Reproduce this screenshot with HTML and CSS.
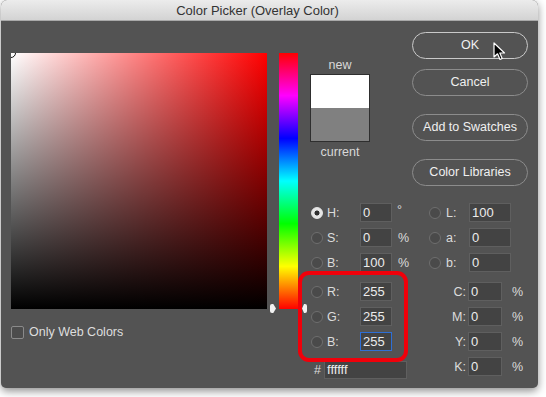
FILE: index.html
```html
<!DOCTYPE html>
<html>
<head>
<meta charset="utf-8">
<link rel="stylesheet" href="styles.css">
</head>
<body>
<div class="dialog">
  <div class="titlebar">Color Picker (Overlay Color)</div>
  <div class="body">
    <div class="left">
      <div class="field"><span class="field-marker"></span></div>
      <div class="webcolors"><span class="checkbox"></span><span>Only Web Colors</span></div>
    </div>
    <div class="slider-wrap">
      <div class="hue"></div>
      <span class="arrow arrow-l"></span>
      <span class="arrow arrow-r"></span>
    </div>
    <div class="right">
      <div class="top">
        <div class="swatch-col">
          <div class="sw-label">new</div>
          <div class="swatch"><div class="sw-new"></div><div class="sw-cur"></div></div>
          <div class="sw-label">current</div>
        </div>
        <div class="buttons">
          <div class="btn btn-ok">OK</div>
          <div class="btn btn-cancel">Cancel</div>
          <div class="btn btn-gap">Add to Swatches</div>
          <div class="btn btn-gap">Color Libraries</div>
        </div>
      </div>
      <div class="fields">
        <div class="col-a">
          <div class="row"><span class="radio on"></span><span class="lbl">H:</span><span class="inp">0</span><span class="unit deg">°</span></div>
          <div class="row"><span class="radio"></span><span class="lbl">S:</span><span class="inp">0</span><span class="unit">%</span></div>
          <div class="row"><span class="radio"></span><span class="lbl">B:</span><span class="inp">100</span><span class="unit">%</span></div>
          <div class="row group"><span class="radio"></span><span class="lbl">R:</span><span class="inp">255</span></div>
          <div class="row"><span class="radio"></span><span class="lbl">G:</span><span class="inp">255</span></div>
          <div class="row"><span class="radio"></span><span class="lbl">B:</span><span class="inp focus">255</span></div>
          <div class="row hexrow"><span class="hash">#</span><span class="inp hex">ffffff</span></div>
        </div>
        <div class="col-b">
          <div class="row"><span class="radio"></span><span class="lbl2">L:</span><span class="inp wide">100</span></div>
          <div class="row"><span class="radio"></span><span class="lbl2">a:</span><span class="inp wide">0</span></div>
          <div class="row"><span class="radio"></span><span class="lbl2">b:</span><span class="inp wide">0</span></div>
          <div class="row group"><span class="lbl3">C:</span><span class="inp cmyk">0</span><span class="unit2">%</span></div>
          <div class="row"><span class="lbl3">M:</span><span class="inp cmyk">0</span><span class="unit2">%</span></div>
          <div class="row"><span class="lbl3">Y:</span><span class="inp cmyk">0</span><span class="unit2">%</span></div>
          <div class="row"><span class="lbl3">K:</span><span class="inp cmyk">0</span><span class="unit2">%</span></div>
        </div>
      </div>
      <div class="highlight"></div>
    </div>
  </div>
  <svg class="cursor" width="13" height="19" viewBox="0 0 13 19"><path d="M1 1 L1 15 L4.5 11.8 L7 17.5 L9.2 16.5 L6.8 11 L11.5 11 Z" fill="#000" stroke="#fff" stroke-width="1.2" stroke-linejoin="round"/></svg>
</div>
</body>
</html>
```

FILE: styles.css
```css
html, body {
  margin: 0;
  padding: 0;
  background: #ffffff;
}
body {
  width: 546px;
  height: 397px;
  overflow: hidden;
  font-family: "Liberation Sans", Arial, sans-serif;
}
.dialog {
  position: relative;
  margin-left: 1px;
  width: 537px;
  height: 388px;
  background: #535353;
  border-radius: 6px 6px 5px 5px;
  box-shadow: 0 3px 8px rgba(0,0,0,0.45);
  overflow: hidden;
}
.titlebar {
  height: 20px;
  line-height: 21px;
  border-bottom: 1px solid #a9a9a9;
  background: linear-gradient(#ececec, #d3d3d3);
  color: #333;
  font-size: 13px;
  text-align: center;
  padding-right: 24px;
}
.body {
  display: flex;
  padding: 11px 0 0 10px;
}
.left {
  margin-top: 21px;
  width: 256px;
}
.field {
  position: relative;
  width: 256px;
  height: 256px;
  overflow: hidden;
  background: linear-gradient(to top, #000, rgba(0,0,0,0)), linear-gradient(to right, #fff, #f00);
}
.field-marker {
  position: absolute;
  left: -5px;
  top: -5px;
  width: 8px;
  height: 8px;
  border: 1.5px solid #111;
  border-radius: 50%;
  box-shadow: inset 0 0 0 1px #fff;
}
.webcolors {
  display: flex;
  align-items: center;
  margin-top: 16px;
  color: #dedede;
  font-size: 12.5px;
}
.checkbox {
  width: 11px;
  height: 11px;
  border: 1px solid #8a8a8a;
  border-radius: 2px;
  background: #4c4c4c;
  margin-right: 5px;
}
.slider-wrap {
  position: relative;
  margin: 21px 0 0 12px;
  width: 19px;
  height: 256px;
}
.hue {
  width: 19px;
  height: 256px;
  background: linear-gradient(to bottom, #f00 0%, #f0f 16.67%, #00f 33.33%, #0ff 50%, #0f0 66.67%, #ff0 83.33%, #f00 100%);
}
.arrow {
  position: absolute;
  top: 251px;
  width: 6px;
  height: 9px;
  background: #f2f2f2;
  border-radius: 2px;
}
.arrow-l {
  left: -9px;
  clip-path: polygon(0 0, 55% 0, 100% 50%, 55% 100%, 0 100%);
}
.arrow-r {
  left: 23px;
  width: 5px;
  clip-path: polygon(0 50%, 40% 0, 100% 0, 100% 100%, 40% 100%);
}
.right {
  position: relative;
  width: 240px;
}
.top {
  display: flex;
}
.swatch-col {
  margin: 26px 0 0 12px;
  width: 60px;
  display: flex;
  flex-direction: column;
  align-items: center;
}
.sw-label {
  color: #d8d8d8;
  font-size: 12.5px;
  line-height: 14px;
}
.swatch {
  width: 58px;
  height: 66px;
  border: 1px solid #2e2e2e;
  margin: 2px 0 3px;
  display: flex;
  flex-direction: column;
}
.sw-new { flex: 1; background: #fff; }
.sw-cur { flex: 1; background: #808080; }
.buttons {
  margin-left: 42px;
  width: 116px;
  display: flex;
  flex-direction: column;
}
.btn {
  box-sizing: border-box;
  height: 27px;
  line-height: 25px;
  border: 1px solid #8c8c8c;
  border-radius: 14px;
  color: #f0f0f0;
  font-size: 12.5px;
  text-align: center;
}
.btn-ok {
  border: 1.5px solid #c9c9c9;
  line-height: 24px;
}
.btn-cancel { margin-top: 10px; }
.btn-gap { margin-top: 18px; }
.fields {
  display: flex;
  margin-top: 14px;
}
.col-a {
  width: 118px;
  padding-left: 13px;
}
.col-b {
  width: 109px;
}
.row {
  height: 25px;
  display: flex;
  align-items: center;
  color: #dcdcdc;
  font-size: 12.5px;
}
.row.group { margin-top: 4px; }
.radio {
  box-sizing: border-box;
  width: 12px;
  height: 12px;
  border-radius: 50%;
  border: 1px solid #6e6e6e;
  background: #4a4a4a;
}
.radio.on {
  background: radial-gradient(circle, #2f2f2f 0 2.2px, #e6e6e6 2.8px);
  border-color: #e6e6e6;
}
.lbl {
  margin-left: 4px;
  width: 33px;
}
.lbl2 {
  margin-left: 5px;
  width: 23px;
}
.lbl3 {
  width: 37px;
  text-align: right;
  margin-right: 2px;
}
.inp {
  box-sizing: border-box;
  width: 32px;
  height: 19px;
  line-height: 17px;
  padding-left: 2px;
  background: #434343;
  border: 1px solid #5f5f5f;
  color: #ececec;
  font-size: 13px;
}
.inp.focus {
  border-color: #2e6fd6;
}
.inp.wide { width: 42px; }
.inp.cmyk { width: 34px; }
.unit { margin-left: 6px; }
.unit.deg { margin-top: -6px; margin-left: 5px; }
.unit2 { margin-left: 10px; }
.hexrow { padding-top: 3px; }
.hash {
  margin-left: 3px;
  width: 10px;
}
.inp.hex {
  width: 83px;
  height: 18px;
  line-height: 16px;
}
.highlight {
  position: absolute;
  left: 0;
  top: 239px;
  width: 110px;
  height: 91px;
  box-sizing: border-box;
  border: 4px solid #f0000a;
  border-radius: 11px;
}
.cursor {
  position: absolute;
  left: 492px;
  top: 42px;
}
```
